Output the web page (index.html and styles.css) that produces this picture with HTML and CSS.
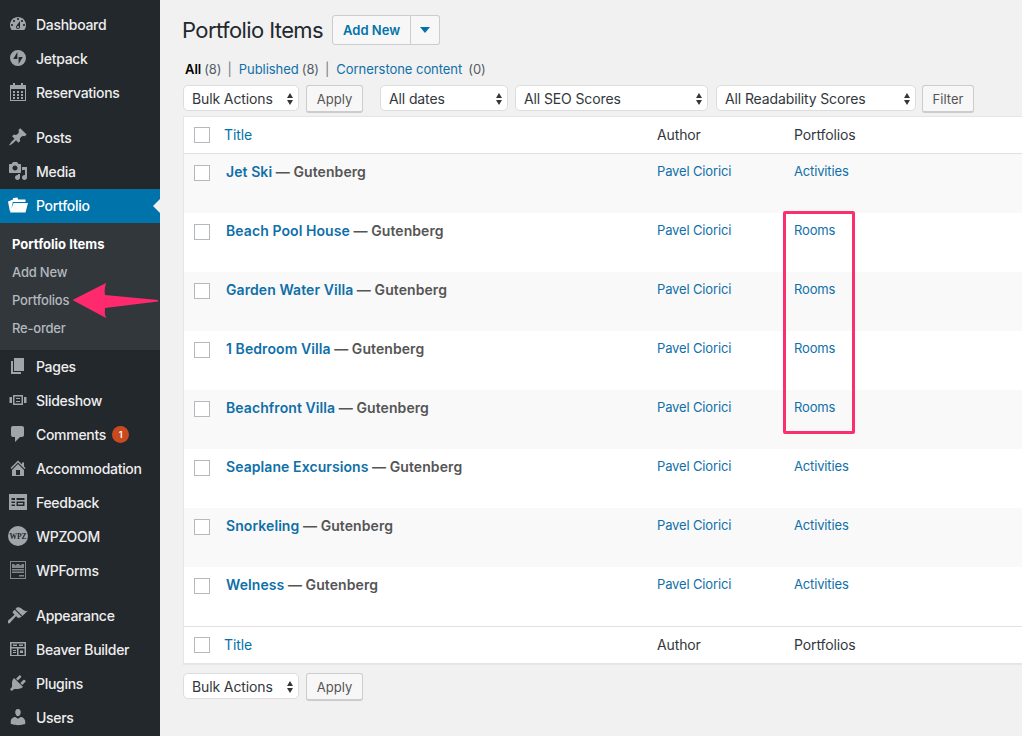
FILE: index.html
```html
<!DOCTYPE html>
<html lang="en">
<head>
<meta charset="utf-8">
<title>Portfolio Items</title>
<link rel="stylesheet" href="styles.css">
</head>
<body>
<div class="app">
  <aside class="side">
    <nav class="menu">
      <a class="mi"><svg class="ic" viewBox="0 0 20 20"><path d="M3.76 16h12.48c1.1-1.37 1.76-3.11 1.76-5 0-4.42-3.58-8-8-8s-8 3.58-8 8c0 1.89.66 3.63 1.76 5zM10 4c.55 0 1 .45 1 1s-.45 1-1 1-1-.45-1-1 .45-1 1-1zM6 6c.55 0 1 .45 1 1s-.45 1-1 1-1-.45-1-1 .45-1 1-1zm8 0c.55 0 1 .45 1 1s-.45 1-1 1-1-.45-1-1 .45-1 1-1zm-5.37 5.55L12 7v6c0 1.1-.9 2-2 2s-2-.9-2-2c0-.57.24-1.08.63-1.45zM4 10c.55 0 1 .45 1 1s-.45 1-1 1-1-.45-1-1 .45-1 1-1zm12 0c.55 0 1 .45 1 1s-.45 1-1 1-1-.45-1-1 .45-1 1-1zm-5 3c0-.55-.45-1-1-1s-1 .45-1 1 .45 1 1 1 1-.45 1-1z" fill-rule="evenodd"/></svg><span>Dashboard</span></a>
      <a class="mi"><svg class="ic" viewBox="0 0 20 20"><path d="M10 2a8 8 0 1 0 0 16 8 8 0 0 0 0-16zM9.4 4v7H5.2zM10.6 16V9h4.2z" fill-rule="evenodd"/></svg><span>Jetpack</span></a>
      <a class="mi"><svg class="ic" viewBox="0 0 20 20"><path d="M5 1h2v2h6V1h2v2h3v16H2V3h3zM3 7v11h14V7zM5 9h2v2H5zm4 0h2v2H9zm4 0h2v2h-2zm-8 3h2v2H5zm4 0h2v2H9zm4 0h2v2h-2zm-8 3h2v2H5zm4 0h2v2H9zm4 0h2v2h-2z" fill-rule="evenodd"/></svg><span>Reservations</span></a>
      <div class="sep"></div>
      <a class="mi"><svg class="ic" viewBox="0 0 20 20"><path d="M10.44 3.02l1.82-1.82 6.36 6.35-1.83 1.82c-1.05-.68-2.48-.57-3.41.36l-.75.75c-.92.93-1.04 2.35-.35 3.41l-1.83 1.82-2.41-2.41-2.8 2.79c-.42.42-3.38 2.71-3.8 2.29s1.86-3.39 2.28-3.81l2.79-2.79L4.1 9.36l1.83-1.82c1.05.69 2.48.57 3.4-.36l.75-.75c.93-.92 1.05-2.35.36-3.41z"/></svg><span>Posts</span></a>
      <a class="mi"><svg class="ic" viewBox="0 0 20 20"><path fill-rule="evenodd" d="M13 11V4c0-.55-.45-1-1-1h-1.67L9 1H5L3.67 3H2c-.55 0-1 .45-1 1v7c0 .55.45 1 1 1h10c.55 0 1-.45 1-1zM7 4.5c1.38 0 2.5 1.12 2.5 2.5S8.38 9.5 7 9.5 4.5 8.38 4.5 7 5.62 4.5 7 4.5zM14 6h5v10.5c0 1.38-1.12 2.5-2.5 2.5S14 17.88 14 16.5s1.12-2.5 2.5-2.5c.17 0 .34.02.5.05V9h-3V6zm-4 8.05V13h2v3.5c0 1.38-1.12 2.5-2.5 2.5S7 17.88 7 16.5 8.12 14 9.5 14c.17 0 .34.02.5.05z"/></svg><span>Media</span></a>
      <a class="mi cur"><svg class="ic" viewBox="0 0 20 20"><path d="M0 6.500 5 4.400l.2-1.400 4.300-.6.5 2.100h7.500V7H4.800L3 16 1.800 16zM5.500 8H20l-2.500 9.500H2z"/></svg><span>Portfolio</span></a>
      <div class="sub">
        <a class="si on">Portfolio Items</a>
        <a class="si">Add New</a>
        <a class="si">Portfolios</a>
        <a class="si">Re-order</a>
      </div>
      <a class="mi"><svg class="ic" viewBox="0 0 20 20"><path d="M6 15V2h10v13H6zm-1 1h8v2H3V5h2v11z"/></svg><span>Pages</span></a>
      <a class="mi"><svg class="ic" viewBox="0 0 20 20"><path fill-rule="evenodd" d="M5 5h10v10H5zm1.500 1.500v7h7v-7zM8 8h4v1H8zm0 3h4v1H8zM1.500 7H4v6H1.500zM16 7h2.500v6H16z"/></svg><span>Slideshow</span></a>
      <a class="mi"><svg class="ic" viewBox="0 0 20 20"><path d="M5 2h9c1.100 0 2 .9 2 2v7c0 1.100-.9 2-2 2h-2l-5 5v-5H5c-1.100 0-2-.9-2-2V4c0-1.100.9-2 2-2z"/></svg><span>Comments</span><b class="badge">1</b></a>
      <a class="mi"><svg class="ic" viewBox="0 0 20 20"><path fill-rule="evenodd" d="M16 8.500l1.530 1.530-1.060 1.060L10 4.620l-6.470 6.470-1.060-1.060L10 2.500l4 4v-2h2v4zm-6-2.460l6 5.990V18H4v-5.970zM12 17v-5H8v5h4z"/></svg><span>Accommodation</span></a>
      <a class="mi"><svg class="ic" viewBox="0 0 20 20"><path fill-rule="evenodd" d="M1 2h18v16H1zm2.500 4v2H7V6zm5 0v2h8V6zm-5 3.500V11H7V9.500zm5 0v4.500h8V9.500zM3.500 12.500V14H7v-1.500zm6.500-1.500h5v1.500h-5z"/></svg><span>Feedback</span></a>
      <a class="mi"><span class="wpz">WPZ</span><span>WPZOOM</span></a>
      <a class="mi"><svg class="ic dim" viewBox="0 0 20 20"><path fill-rule="evenodd" d="M2 1h16v18H2zm1 1v16h14V2zM4 4h2l1.500 1.500L9 4h2l1.500 1.500L14 4h2v4H4zm0 5h12v1.500H4zm0 2.500h12V13H4zM11 15h5v1.500h-5z"/></svg><span>WPForms</span></a>
      <div class="sep"></div>
      <a class="mi"><svg class="ic" viewBox="0 0 20 20"><path d="M14.480 11.060L7.410 3.990l1.500-1.500c.5-.56 2.300-.47 3.510.32 1.210.8 1.430 1.280 2.910 2.100 1.180.64 2.450 1.260 4.450.85zm-.71.71L6.700 4.700 4.930 6.470c-.39.39-.39 1.020 0 1.410l1.060 1.060c.39.39.39 1.030 0 1.420-.6.6-6.600 6.040-6.600 6.040-.5.9 1.100 2.400 2 2l6.040-6.600c.6-.6 1.030-.39 1.420 0l1.060 1.060c.39.39 1.020.39 1.410 0z"/></svg><span>Appearance</span></a>
      <a class="mi"><svg class="ic" viewBox="0 0 20 20"><path fill-rule="evenodd" d="M2 3h16v14H2zm1.500 1.500V8h13V4.500zM5 5.500h4V7H5zm6 0h4V7h-4zM3.500 9.500V16H9V9.500zm7 0V16h6V9.500zM5 11h3v1H5zm0 2h3v1H5zm7-1.500h3v2.500h-3z"/></svg><span>Beaver Builder</span></a>
      <a class="mi"><svg class="ic" viewBox="0 0 20 20"><path d="M13.110 4.360L9.870 7.600 8 5.730l3.240-3.240c.35-.34 1.050-.2 1.560.32.52.51.66 1.210.31 1.550zm-8 1.770l.91-1.120 9.010 9.010-1.190.84c-.71.71-2.630 1.160-3.820 1.160H6.140L4.900 17.260c-.59.59-1.540.59-2.120 0-.59-.58-.59-1.530 0-2.120l1.240-1.240v-3.880c0-1.130.4-3.190 1.090-3.890zm7.260 3.970l3.240-3.240c.34-.35 1.040-.21 1.550.31.52.51.66 1.210.31 1.550l-3.240 3.250z"/></svg><span>Plugins</span></a>
      <a class="mi"><svg class="ic" viewBox="0 0 20 20"><path d="M10 9.250c-2.270 0-2.730-3.440-2.730-3.440C7 4.020 7.820 2 9.970 2c2.160 0 2.980 2.020 2.710 3.810 0 0-.41 3.440-2.680 3.440zm0 2.570L12.720 10c2.390 0 4.520 2.330 4.520 4.530v2.490s-3.650 1.130-7.240 1.130c-3.650 0-7.240-1.130-7.240-1.130v-2.490c0-2.250 1.940-4.530 4.470-4.530z"/></svg><span>Users</span></a>
    </nav>
  </aside>

  <main class="main">
    <header class="head">
      <h1>Portfolio Items</h1>
      <div class="addnew"><a class="an-l">Add New</a><a class="an-r"><i class="tri"></i></a></div>
    </header>
    <div class="views">
      <b>All</b><span class="cnt">(8)</span><span class="bar">|</span><a>Published</a><span class="cnt">(8)</span><span class="bar">|</span><a>Cornerstone content</a><span class="cnt sp">(0)</span>
    </div>
    <div class="nav">
      <div class="sel w-bulk">Bulk Actions<i class="updown"></i></div>
      <button class="btn w-apply">Apply</button>
      <div class="sel w-dates">All dates<i class="updown"></i></div>
      <div class="sel w-seo">All SEO Scores<i class="updown"></i></div>
      <div class="sel w-read">All Readability Scores<i class="updown"></i></div>
      <button class="btn w-filter">Filter</button>
    </div>
    <div class="table">
      <div class="row hd"><i class="cb"></i><a class="t">Title</a><span class="au">Author</span><span class="pf">Portfolios</span></div>
      <div class="row it alt"><i class="cb"></i><div class="name"><a>Jet Ski</a> — Gutenberg</div><a class="au">Pavel Ciorici</a><a class="pf">Activities</a></div>
      <div class="row it"><i class="cb"></i><div class="name"><a>Beach Pool House</a> — Gutenberg</div><a class="au">Pavel Ciorici</a><a class="pf">Rooms</a></div>
      <div class="row it alt"><i class="cb"></i><div class="name"><a>Garden Water Villa</a> — Gutenberg</div><a class="au">Pavel Ciorici</a><a class="pf">Rooms</a></div>
      <div class="row it"><i class="cb"></i><div class="name"><a>1 Bedroom Villa</a> — Gutenberg</div><a class="au">Pavel Ciorici</a><a class="pf">Rooms</a></div>
      <div class="row it alt"><i class="cb"></i><div class="name"><a>Beachfront Villa</a> — Gutenberg</div><a class="au">Pavel Ciorici</a><a class="pf">Rooms</a></div>
      <div class="row it"><i class="cb"></i><div class="name"><a>Seaplane Excursions</a> — Gutenberg</div><a class="au">Pavel Ciorici</a><a class="pf">Activities</a></div>
      <div class="row it alt"><i class="cb"></i><div class="name"><a>Snorkeling</a> — Gutenberg</div><a class="au">Pavel Ciorici</a><a class="pf">Activities</a></div>
      <div class="row it"><i class="cb"></i><div class="name"><a>Welness</a> — Gutenberg</div><a class="au">Pavel Ciorici</a><a class="pf">Activities</a></div>
      <div class="row ft"><i class="cb"></i><a class="t">Title</a><span class="au">Author</span><span class="pf">Portfolios</span></div>
    </div>
    <div class="nav bottom">
      <div class="sel w-bulk">Bulk Actions<i class="updown"></i></div>
      <button class="btn w-apply">Apply</button>
    </div>
  </main>

  <svg class="arrow" viewBox="0 0 90 40"><path d="M1.500 18 35 1Q33 8 34 13L87 18V19.500L34 26Q33 31 35 36z"/></svg>
  <div class="hilite"></div>
</div>
</body>
</html>
```
FILE: styles.css
```css
* { box-sizing: border-box; }
html, body { margin: 0; padding: 0; height: 100%; overflow: hidden; }
body { background: #f1f1f1; color: #444; font-family: Inter, "Noto Sans", sans-serif; font-size: 13px; }
a { color: #0f6fa8; text-decoration: none; }
.app { position: relative; display: flex; width: 1022px; height: 736px; overflow: hidden; }

.side { width: 160px; flex: none; background: #23282d; padding-top: 8px; }
.menu { display: flex; flex-direction: column; }
.mi { display: flex; align-items: center; height: 34px; padding-bottom: 2px; color: #eee; font-size: 14px; font-weight: 500; letter-spacing: -.3px; position: relative; flex: none; }
.ic { width: 20px; height: 20px; margin: 0 8px; fill: #a0a5aa; flex: none; }
.ic.dim { fill: #82878c; }
.sep { height: 11px; flex: none; }
.cur { background: #0073aa; color: #fff; }
.cur .ic { fill: #fff; }
.cur::after { content: ""; position: absolute; right: 0; top: 10px; border: 7px solid transparent; border-right-color: #f1f1f1; border-left-width: 0; }
.sub { display: flex; flex-direction: column; background: #32373c; height: 127px; padding: 7px 0; flex: none; }
.si { display: flex; align-items: center; height: 28px; padding-left: 12px; color: #b4b9be; font-size: 13px; font-weight: 500; letter-spacing: -.2px; }
.si.on { color: #fff; font-weight: 700; letter-spacing: 0; }
.badge { display: flex; align-items: center; justify-content: center; width: 17px; height: 17px; margin-left: 6px; border-radius: 50%; background: #ca4a1f; color: #fff; font-size: 9px; font-weight: 600; letter-spacing: 0; }
.wpz { width: 20px; height: 20px; margin: 0 8px; border-radius: 50%; background: #a0a5aa; color: #23282d; font: 700 7.500px "Liberation Serif", serif; letter-spacing: 0; display: flex; align-items: center; justify-content: center; flex: none; }

.main { flex: 1; min-width: 0; padding: 15px 0 0 23px; margin-right: -4px; }
.head { display: flex; align-items: center; height: 30px; }
h1 { margin: 0 9px 0 -1px; font-size: 22px; font-weight: 400; color: #23282d; letter-spacing: -.6px; line-height: 30px; }
.addnew { display: flex; height: 30px; }
.an-l, .an-r { display: flex; align-items: center; justify-content: center; background: #f7f7f7; border: 1px solid #ccc; font-size: 13px; font-weight: 600; color: #0073aa; }
.an-l { width: 79px; border-radius: 3px 0 0 3px; }
.an-r { width: 29px; border-left: 0; border-radius: 0 3px 3px 0; }
.tri { border: 5px solid transparent; border-top: 6px solid #0073aa; border-bottom: 0; }

.views { display: flex; align-items: center; height: 18px; margin-top: 15px; font-size: 13px; color: #555d66; margin-left: 2px; letter-spacing: -.05px; }
.views b { color: #000; font-weight: 600; }
.views .cnt { margin-left: 3px; }
.views .cnt.sp { margin-left: 6px; }
.views .bar { margin: 0 7px 0 6px; color: #72777c; }

.nav { display: flex; align-items: flex-start; margin-top: 7px; }
.sel { position: relative; height: 26px; line-height: 25px; background: #fff; border: 1px solid #ddd; border-radius: 5px; padding-left: 8px; font-size: 14px; color: #32373c; letter-spacing: -.12px; }
.updown { position: absolute; right: 4px; top: 7px; width: 7px; height: 12px; }
.updown::before, .updown::after { content: ""; position: absolute; left: 0; border: 3.500px solid transparent; }
.updown::before { top: 0; border-bottom: 5px solid #32373c; border-top: 0; }
.updown::after { bottom: 0; border-top: 5px solid #32373c; border-bottom: 0; }
.btn { height: 28px; background: #f7f7f7; border: 1px solid #ccc; border-bottom-width: 2px; border-radius: 3px; font: 13px Inter, sans-serif; color: #555; padding: 0; }
.w-bulk { width: 116px; }
.w-apply { width: 57px; margin-left: 7px; }
.w-dates { width: 128px; margin-left: 17px; }
.w-seo { width: 193px; margin-left: 7px; }
.w-read { width: 200px; margin-left: 8px; }
.w-filter { width: 52px; margin-left: 6px; }

.table { margin-top: 3px; background: #fff; border: 1px solid #e5e5e5; box-shadow: 0 1px 1px rgba(0,0,0,.04); border-right: 0; }
.row { display: grid; grid-template-columns: 40px 433px 137px 1fr; align-items: start; font-size: 13px; letter-spacing: -.15px; }
.hd, .ft { height: 37px; align-items: center; font-size: 14px; color: #32373c; letter-spacing: -.12px; }
.hd .t, .hd .au, .hd .pf, .ft .t, .ft .au, .ft .pf { margin-top: -2px; }
.hd { border-bottom: 1px solid #e1e1e1; }
.ft { border-top: 1px solid #e1e1e1; }
.it { height: 59px; padding-top: 8px; }
.alt { background: #f9f9f9; }
.cb { display: block; width: 16px; height: 16px; margin-left: 10px; background: #fff; border: 1px solid #b4b9be; }
.it .cb { margin-top: 3px; }
.t { color: #0073aa; font-size: 14px; }
.name { padding-left: 2px; font-size: 14px; font-weight: 600; color: #555; line-height: 20px; letter-spacing: .08px; }
.name a { color: #0f6fa8; }
.it .au, .it .pf { line-height: 20px; margin-top: -1px; }

.bottom { margin-top: 9px; }

.arrow { position: absolute; left: 71px; top: 282px; width: 90px; height: 40px; fill: #ff2a6d; }
.hilite { position: absolute; left: 783px; top: 211px; width: 72px; height: 223px; border: 3px solid #fb2f6e; border-radius: 2px; }
```
